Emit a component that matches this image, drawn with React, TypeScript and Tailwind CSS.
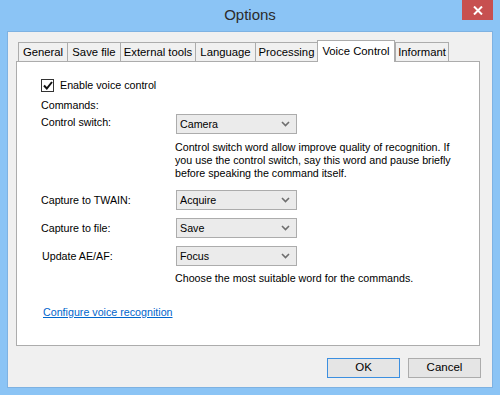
import React from "react";

const tabs = [
  { label: "General", w: 49 },
  { label: "Save file", w: 53 },
  { label: "External tools", w: 75 },
  { label: "Language", w: 60 },
  { label: "Processing", w: 62 },
  { label: "Voice Control", w: 78, active: true },
  { label: "Informant", w: 53 },
];

function Select({ value }: { value: string }) {
  return (
    <div className="w-[121px] h-[20px] border border-[#acacac] bg-[#ebebeb] flex items-center justify-between pl-[3px] pr-[6px]">
      <span>{value}</span>
      <svg width="9" height="6" viewBox="0 0 9 6">
        <path d="M1 1 L4.5 4.5 L8 1" fill="none" stroke="#6e6e6e" strokeWidth="1.6" />
      </svg>
    </div>
  );
}

export default function App() {
  return (
    <div
      className="w-[500px] h-[395px] bg-[#8bc4f5] flex flex-col text-[10.7px] text-black"
      style={{ fontFamily: '"Liberation Sans", Arial, sans-serif' }}
    >
      <div className="h-[31px] relative flex items-center justify-center">
        <span className="text-[15px] text-[#2b2b2b] pb-[1px]">Options</span>
        <div className="absolute right-[7px] top-0 w-[31px] h-[20px] bg-[#c75050] flex items-center justify-center">
          <svg width="10" height="9" viewBox="0 0 10 9">
            <path d="M1 0.5 L9 8.5 M9 0.5 L1 8.5" stroke="white" strokeWidth="2" />
          </svg>
        </div>
      </div>
      <div className="mx-[7px] h-[357px] border border-[#7eb2e2] bg-[#f0f0f0] flex flex-col pl-[8px] pr-[11px] pt-[8px]">
        <div className="flex items-end h-[21px] pl-[2px]">
          {tabs.map((t) =>
            t.active ? (
              <div
                key={t.label}
                className="h-[22px] -mb-[1px] bg-white border border-b-0 border-[#acacac] flex items-start justify-center pt-[2px] relative z-10 text-[11.3px]"
                style={{ width: t.w }}
              >
                {t.label}
              </div>
            ) : (
              <div
                key={t.label}
                className="h-[19px] bg-[#f0f0f0] border border-b-0 border-[#acacac] -mr-[1px] flex items-center justify-center text-[11.3px]"
                style={{ width: t.w + 1 }}
              >
                {t.label}
              </div>
            )
          )}
        </div>
        <div className="h-[285px] w-[464px] bg-white border border-[#acacac] pl-[24px] pt-[16px] flex flex-col">
          <div className="flex items-center gap-[6px] h-[14px]">
            <div className="w-[13px] h-[13px] border border-[#333] flex items-center justify-center">
              <svg width="10" height="9" viewBox="0 0 10 9">
                <path d="M1 4.5 L3.8 7.5 L9 1" fill="none" stroke="#111" strokeWidth="2" />
              </svg>
            </div>
            <span>Enable voice control</span>
          </div>
          <div className="mt-[6px] h-[14px] leading-[14px]">Commands:</div>
          <div className="mt-[3px] flex">
            <div className="w-[135px] leading-[14px]">Control switch:</div>
            <div className="flex flex-col -mt-[1px]">
              <Select value="Camera" />
              <div className="mt-[7px] leading-[13px] -ml-[1px]">
                Control switch word allow improve quality of recognition. If
                <br />
                you use the control switch, say this word and pause briefly
                <br />
                before speaking the command itself.
              </div>
            </div>
          </div>
          <div className="mt-[10px] flex items-center">
            <div className="w-[135px]">Capture to TWAIN:</div>
            <Select value="Acquire" />
          </div>
          <div className="mt-[8px] flex items-center">
            <div className="w-[135px]">Capture to file:</div>
            <Select value="Save" />
          </div>
          <div className="mt-[8px] flex items-center">
            <div className="w-[135px] pl-[1px]">Update AE/AF:</div>
            <Select value="Focus" />
          </div>
          <div className="ml-[134px] mt-[4px]">Choose the most suitable word for the commands.</div>
          <div className="mt-[18px] ml-[2px] text-[#0066cc] underline">Configure voice recognition</div>
        </div>
        <div className="flex justify-end gap-[8px] mt-[12px]">
          <div className="w-[73px] h-[20px] border border-[#3c8fe0] bg-[#e5e5e5] flex items-center justify-center text-[11.5px]">OK</div>
          <div className="w-[73px] h-[20px] border border-[#acacac] bg-[#e5e5e5] flex items-center justify-center text-[11.5px]">Cancel</div>
        </div>
      </div>
    </div>
  );
}
